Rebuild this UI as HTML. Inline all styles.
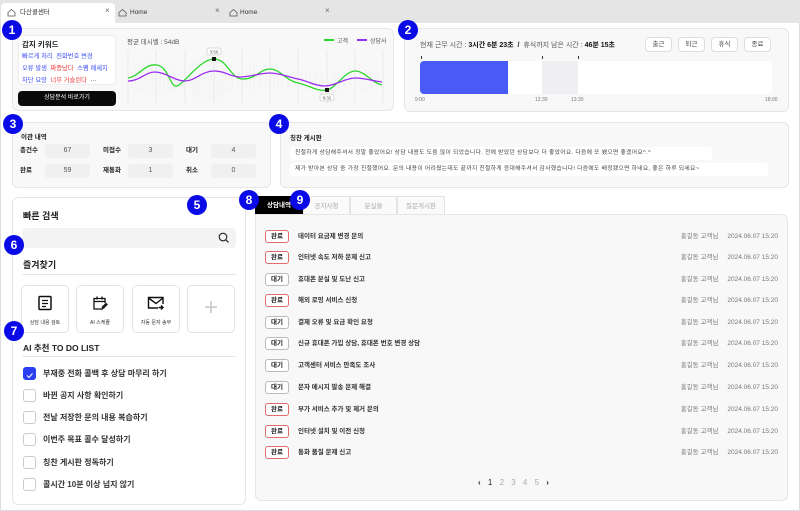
<!DOCTYPE html>
<html><head><meta charset="utf-8"><style>
*{box-sizing:border-box;margin:0;padding:0}
body{width:800px;height:511px;overflow:hidden;background:#fff;font-family:"Liberation Sans","Noto Sans CJK KR",sans-serif;color:#222;position:relative}
.a{position:absolute}
.panel{position:absolute;background:#f8f8f8;border:1px solid #e6e6e6;border-radius:6px}
.num{position:absolute;width:20px;height:20px;border-radius:50%;background:#0a0ae6;color:#fff;font-weight:bold;font-size:12px;text-align:center;line-height:20px;z-index:5}
.tab{position:absolute;top:3px;height:20px;font-size:6.5px;line-height:20px;padding-left:20px;color:#333}
.badge{position:absolute;left:9px;top:0;width:24px;height:13px;border:1px solid #e06b6b;border-radius:3px;background:#fff;font-size:6.5px;font-weight:bold;text-align:center;line-height:11px}
.badge.w{border-color:#bbb}
.row{position:absolute;left:0;width:532px;height:13px;font-size:6.5px;line-height:13px}
.row .t{position:absolute;left:42px;top:0;font-weight:bold;color:#333}
.row .m{position:absolute;right:10px;top:0;color:#777}
.row .m span{margin-right:9px}
.st{position:absolute;font-size:6.5px;font-weight:bold;line-height:14px}
.sv{position:absolute;width:45px;height:14px;background:#f0f0f0;border-radius:3px;font-size:7px;text-align:center;line-height:14px;color:#555}
.cb{position:absolute;left:23px;width:13px;height:13px;border:1px solid #ccc;border-radius:3px;background:#fff}
.todo{position:absolute;left:43px;font-size:8px;font-weight:bold;color:#333;line-height:13px}
.fav{position:absolute;top:285px;width:48px;height:48px;border:1px solid #e3e3e3;border-radius:5px;background:#fff;font-size:5px;text-align:center;color:#333}
.btn{position:absolute;top:37px;width:27px;height:15px;border:1px solid #ddd;border-radius:4px;background:#fff;font-size:6.5px;text-align:center;line-height:13px;color:#444}
</style></head><body>
<div class="a" style="left:0;top:0;width:800px;height:23px;background:#e5e5e5"></div>
<div class="a" style="left:1px;top:3px;width:114px;height:20px;background:#fff;border-radius:4px 4px 0 0"></div>
<div class="tab" style="left:0px">다산콜센터</div><div class="a" style="left:105px;top:6px;font-size:8px;color:#666">×</div>
<div class="tab" style="left:110px">Home</div><div class="a" style="left:215px;top:6px;font-size:8px;color:#666">×</div>
<div class="tab" style="left:220px">Home</div><div class="a" style="left:325px;top:6px;font-size:8px;color:#666">×</div>
<svg class="a" style="left:7px;top:8px" width="9" height="9" viewBox="0 0 9 9"><path d="M1 4.5L4.5 1.5 8 4.5V8H1Z" fill="none" stroke="#555" stroke-width=".8"/></svg>
<svg class="a" style="left:118px;top:8px" width="9" height="9" viewBox="0 0 9 9"><path d="M1 4.5L4.5 1.5 8 4.5V8H1Z" fill="none" stroke="#555" stroke-width=".8"/></svg>
<svg class="a" style="left:229px;top:8px" width="9" height="9" viewBox="0 0 9 9"><path d="M1 4.5L4.5 1.5 8 4.5V8H1Z" fill="none" stroke="#555" stroke-width=".8"/></svg>
<div class="a" style="left:0;top:23px;width:800px;height:488px;border:1px solid #ddd;border-top:none"></div>

<div class="panel" style="left:12px;top:28px;width:382px;height:83px"></div>
<div class="a" style="left:18px;top:35px;width:98px;height:50px;background:#fff;border:1px solid #eee;border-radius:4px"></div>
<div class="a" style="left:22px;top:39px;font-size:7.5px;font-weight:bold">감지 키워드</div>
<div class="a" style="left:22px;top:51px;font-size:6.3px;color:#3b4ef0;line-height:12px;width:98px;white-space:nowrap">빠르게 처리&nbsp; 전화번호 변경<br>오류 발생&nbsp; <span style="color:#e33">짜증났다</span>&nbsp; 스팸 메세지<br>차단 요망&nbsp; <span style="color:#e33">너무 거슬린다</span>&nbsp; <span style="color:#333">···</span></div>
<div class="a" style="left:18px;top:91px;width:98px;height:15px;background:#0a0a0a;border-radius:4px;color:#fff;font-size:6px;text-align:center;line-height:15px">상담분석 바로가기</div>
<div class="a" style="left:127px;top:36px;font-size:6.5px;color:#555">평균 데시벨 : 54dB</div>
<div class="a" style="left:324px;top:39px;width:10px;height:2px;background:#2bd62b"></div><div class="a" style="left:337px;top:36px;font-size:6px;color:#555">고객</div>
<div class="a" style="left:357px;top:39px;width:10px;height:2px;background:#9a2bf0"></div><div class="a" style="left:370px;top:36px;font-size:6px;color:#555">상담사</div>
<svg class="a" style="left:120px;top:28px" width="280" height="85" viewBox="0 0 280 85">
<g stroke="#e2e2e2" stroke-width=".6"><path d="M8 22V75M36 22V75M65 22V75M94 22V75M122 22V75M150 22V75M178 22V75M207 22V75M235 22V75M263 22V75"/></g>
<g stroke="#ddd" stroke-width=".4" opacity=".5"><path d="M12 42V60M15 38V64M18 35V66M21 40V62M24 38V64M27 34V68M30 30V70M33 38V64M40 34V66M44 36V64M48 40V62M51 38V64M54 36V66M58 42V60M62 44V58M70 38V64M73 34V68M76 32V70M79 30V72M82 28V72M85 24V76M88 26V74M91 30V72M97 28V72M100 30V70M103 34V68M106 36V66M109 40V64M112 40V62M118 42V60M126 40V60M130 38V62M134 36V64M140 42V58M146 38V62M154 40V60M158 42V60M162 44V58M168 38V62M174 42V58M182 40V62M186 42V62M190 44V60M196 42V64M200 44V66M203 46V66M212 44V68M215 42V66M218 40V66M224 42V62M230 38V60M240 36V64M243 38V64M246 40V62M252 42V60M258 44V60"/></g>
<path d="M8 50C20 48 25 35 37 37S50 60 57 58S80 31 94 31S110 51 123 51S140 41 150 41S165 52 178 55S198 64 207 62S225 43 235 43S252 55 262 57" fill="none" stroke="#2bd62b" stroke-width="1.3"/>
<path d="M8 53C20 53 25 44 35 44S55 53 65 53S82 43 94 43S110 49 120 49S140 45 150 45S168 49 178 51S195 58 205 58S225 50 235 50S252 53 262 54" fill="none" stroke="#9a2bf0" stroke-width="1.3"/>
<rect x="92" y="29" width="4" height="4" fill="#111"/><rect x="205" y="60" width="4" height="4" fill="#111"/>
<rect x="87" y="20" width="14" height="7" rx="2" fill="#fff" stroke="#bbb" stroke-width=".5"/><text x="94" y="25.5" font-size="4.5" text-anchor="middle" fill="#555">3:56</text>
<rect x="200" y="66" width="14" height="7" rx="2" fill="#fff" stroke="#bbb" stroke-width=".5"/><text x="207" y="71.5" font-size="4.5" text-anchor="middle" fill="#555">8:32</text>
</svg>

<div class="panel" style="left:404px;top:28px;width:385px;height:84px"></div>
<div class="a" style="left:420px;top:40px;font-size:7px;color:#555">현재 근무 시간 : <b style="color:#111">3시간 6분 23초</b>&nbsp; <b style="color:#111">/</b>&nbsp; 휴식까지 남은 시간 : <b style="color:#111">46분 15초</b></div>
<div class="btn" style="left:645px">출근</div><div class="btn" style="left:678px">퇴근</div><div class="btn" style="left:711px">휴식</div><div class="btn" style="left:744px">종료</div>
<div class="a" style="left:420px;top:61px;width:352px;height:33px;background:#fff;border-radius:4px"></div>
<div class="a" style="left:420px;top:61px;width:88px;height:33px;background:#4a5af5;border-radius:4px 0 0 4px"></div>
<div class="a" style="left:542px;top:61px;width:36px;height:33px;background:#efeff3"></div>
<div class="a" style="left:421px;top:56px;width:1px;height:3px;background:#333"></div>
<div class="a" style="left:542px;top:56px;width:1px;height:3px;background:#333"></div>
<div class="a" style="left:578px;top:56px;width:1px;height:3px;background:#333"></div>
<div class="a" style="left:415px;top:97px;font-size:5px;color:#777">9:00</div>
<div class="a" style="left:535px;top:97px;font-size:5px;color:#777">12:30</div>
<div class="a" style="left:571px;top:97px;font-size:5px;color:#777">13:30</div>
<div class="a" style="left:765px;top:97px;font-size:5px;color:#777">18:00</div>

<div class="panel" style="left:12px;top:122px;width:259px;height:66px"></div>
<div class="a" style="left:21px;top:131px;font-size:6.5px;font-weight:bold">이관 내역</div>
<div class="st" style="left:20px;top:144px">총건수</div><div class="sv" style="left:45px;top:144px">67</div>
<div class="st" style="left:103px;top:144px">미접수</div><div class="sv" style="left:128px;top:144px">3</div>
<div class="st" style="left:186px;top:144px">대기</div><div class="sv" style="left:211px;top:144px">4</div>
<div class="st" style="left:20px;top:164px">완료</div><div class="sv" style="left:45px;top:164px">59</div>
<div class="st" style="left:103px;top:164px">재통화</div><div class="sv" style="left:128px;top:164px">1</div>
<div class="st" style="left:186px;top:164px">취소</div><div class="sv" style="left:211px;top:164px">0</div>

<div class="panel" style="left:280px;top:122px;width:509px;height:66px"></div>
<div class="a" style="left:290px;top:132px;font-size:6.5px;font-weight:bold">칭찬 게시판</div>
<div class="a" style="left:290px;top:147px;height:13px;width:422px;background:#fff;border-radius:3px;font-size:5.8px;line-height:13px;padding-left:5px;color:#444;white-space:nowrap;letter-spacing:.3px">친절하게 상담해주셔서 정말 좋았어요! 상담 내용도 도움 많이 되었습니다. 전에 받았던 상담보다 더 좋았어요. 다음에 또 뵀으면 좋겠어요^.^</div>
<div class="a" style="left:290px;top:163px;height:13px;width:478px;background:#fff;border-radius:3px;font-size:5.8px;line-height:13px;padding-left:5px;color:#444;white-space:nowrap;letter-spacing:.3px">제가 받아본 상담 중 가장 친절했어요. 문의 내용이 어려웠는데도 끝까지 친절하게 응대해주셔서 감사했습니다! 다음에도 배정됐으면 하네요, 좋은 하루 되세요~</div>

<div class="panel" style="left:12px;top:197px;width:234px;height:308px;background:#fff"></div>
<div class="a" style="left:23px;top:209px;font-size:9px;font-weight:bold">빠른 검색</div>
<div class="a" style="left:22px;top:228px;width:214px;height:20px;background:#f3f3f3;border-radius:4px"></div>
<svg class="a" style="left:218px;top:232px" width="12" height="12" viewBox="0 0 12 12"><circle cx="5" cy="5" r="3.8" fill="none" stroke="#222" stroke-width="1.1"/><path d="M8 8L10.5 10.5" stroke="#222" stroke-width="1.2"/></svg>
<div class="a" style="left:23px;top:258px;font-size:9px;font-weight:bold">즐겨찾기</div>
<div class="a" style="left:22px;top:274px;width:214px;height:1px;background:#e6e6e6"></div>
<div class="fav" style="left:21px"><svg style="margin-top:9px" width="16" height="16" viewBox="0 0 16 16"><rect x="2" y="1.5" width="12" height="13" rx="1" fill="none" stroke="#111" stroke-width="1.5"/><path d="M5 5.5H11M5 8.5H11M5 11.5H9" stroke="#111" stroke-width="1.3"/></svg><div style="margin-top:6px">상담 내용 검토</div></div>
<div class="fav" style="left:76px"><svg style="margin-top:9px" width="16" height="16" viewBox="0 0 16 16"><path d="M13 8V3.5H2V14H9M2 6.5H13M5 1.5V4.5M10 1.5V4.5M10 14L10.5 12 14 8.5 15 9.5 11.5 13Z" fill="none" stroke="#111" stroke-width="1.3"/></svg><div style="margin-top:6px">AI 스케쥴</div></div>
<div class="fav" style="left:132px"><svg style="margin-top:9px" width="18" height="16" viewBox="0 0 18 16"><path d="M11 13H1.5V2.5H16V9M1.5 3L9 8.5 16 3M11.5 12.5H16M14 10.5L16 12.5 14 14.5" fill="none" stroke="#111" stroke-width="1.4"/></svg><div style="margin-top:6px">자동 문자 송부</div></div>
<div class="fav" style="left:187px;font-size:24px;color:#ccc;line-height:44px;font-weight:200">+</div>
<div class="a" style="left:23px;top:342px;font-size:8.5px;font-weight:bold">AI 추천 TO DO LIST</div>
<div class="a" style="left:22px;top:356px;width:214px;height:1px;background:#e6e6e6"></div>
<div class="cb" style="top:367px;background:#2c3ff0;border-color:#2c3ff0"><svg width="11" height="11" viewBox="0 0 11 11"><path d="M3 5.5L5 7.5 8.5 3.5" fill="none" stroke="#fff" stroke-width="1"/></svg></div><div class="todo" style="top:367px">부재중 전화 콜백 후 상담 마무리 하기</div>
<div class="cb" style="top:389px"></div><div class="todo" style="top:389px">바뀐 공지 사항 확인하기</div>
<div class="cb" style="top:411px"></div><div class="todo" style="top:411px">전날 저장한 문의 내용 복습하기</div>
<div class="cb" style="top:433px"></div><div class="todo" style="top:433px">이번주 목표 콜수 달성하기</div>
<div class="cb" style="top:456px"></div><div class="todo" style="top:456px">칭찬 게시판 정독하기</div>
<div class="cb" style="top:478px"></div><div class="todo" style="top:478px">콜시간 10분 이상 넘지 않기</div>

<div class="a" style="left:255px;top:196px;width:48px;height:19px;background:#000;color:#fff;font-size:6.5px;text-align:center;line-height:19px;font-weight:bold">상담내역</div>
<div class="a" style="left:303px;top:196px;width:47px;height:19px;border:1px solid #e3e3e3;border-bottom:none;background:#fafafa;color:#aaa;font-size:6.5px;text-align:center;line-height:19px">공지사항</div>
<div class="a" style="left:350px;top:196px;width:47px;height:19px;border:1px solid #e3e3e3;border-bottom:none;background:#fafafa;color:#aaa;font-size:6.5px;text-align:center;line-height:19px">분실물</div>
<div class="a" style="left:397px;top:196px;width:48px;height:19px;border:1px solid #e3e3e3;border-bottom:none;background:#fafafa;color:#aaa;font-size:6.5px;text-align:center;line-height:19px">질문게시판</div>
<div class="panel" style="left:255px;top:214px;width:533px;height:287px;border-radius:0 6px 6px 6px">
<div class="row" style="top:15px"><div class="badge">완료</div><div class="t">데이터 요금제 변경 문의</div><div class="m"><span>홍길동 고객님</span>2024.06.07 15:20</div></div>
<div class="row" style="top:36px"><div class="badge">완료</div><div class="t">인터넷 속도 저하 문제 신고</div><div class="m"><span>홍길동 고객님</span>2024.06.07 15:20</div></div>
<div class="row" style="top:58px"><div class="badge w">대기</div><div class="t">휴대폰 분실 및 도난 신고</div><div class="m"><span>홍길동 고객님</span>2024.06.07 15:20</div></div>
<div class="row" style="top:79px"><div class="badge">완료</div><div class="t">해외 로밍 서비스 신청</div><div class="m"><span>홍길동 고객님</span>2024.06.07 15:20</div></div>
<div class="row" style="top:101px"><div class="badge w">대기</div><div class="t">결제 오류 및 요금 확인 요청</div><div class="m"><span>홍길동 고객님</span>2024.06.07 15:20</div></div>
<div class="row" style="top:122px"><div class="badge w">대기</div><div class="t">신규 휴대폰 가입 상담, 휴대폰 번호 변경 상담</div><div class="m"><span>홍길동 고객님</span>2024.06.07 15:20</div></div>
<div class="row" style="top:144px"><div class="badge w">대기</div><div class="t">고객센터 서비스 만족도 조사</div><div class="m"><span>홍길동 고객님</span>2024.06.07 15:20</div></div>
<div class="row" style="top:166px"><div class="badge w">대기</div><div class="t">문자 메시지 발송 문제 해결</div><div class="m"><span>홍길동 고객님</span>2024.06.07 15:20</div></div>
<div class="row" style="top:188px"><div class="badge">완료</div><div class="t">부가 서비스 추가 및 제거 문의</div><div class="m"><span>홍길동 고객님</span>2024.06.07 15:20</div></div>
<div class="row" style="top:210px"><div class="badge">완료</div><div class="t">인터넷 설치 및 이전 신청</div><div class="m"><span>홍길동 고객님</span>2024.06.07 15:20</div></div>
<div class="row" style="top:231px"><div class="badge">완료</div><div class="t">통화 품질 문제 신고</div><div class="m"><span>홍길동 고객님</span>2024.06.07 15:20</div></div>
<div class="a" style="left:222px;top:263px;font-size:8px;color:#aaa;word-spacing:5px;white-space:nowrap"><b style="color:#222">‹</b> <span style="color:#222">1</span> 2 3 4 5 <b style="color:#222">›</b></div>
</div>

<div class="num" style="left:2px;top:20px">1</div>
<div class="num" style="left:398px;top:20px">2</div>
<div class="num" style="left:3px;top:114px">3</div>
<div class="num" style="left:269px;top:114px">4</div>
<div class="num" style="left:187px;top:195px">5</div>
<div class="num" style="left:239px;top:190px">8</div>
<div class="num" style="left:290px;top:190px">9</div>
<div class="num" style="left:4px;top:235px">6</div>
<div class="num" style="left:4px;top:321px">7</div>
</body></html>
